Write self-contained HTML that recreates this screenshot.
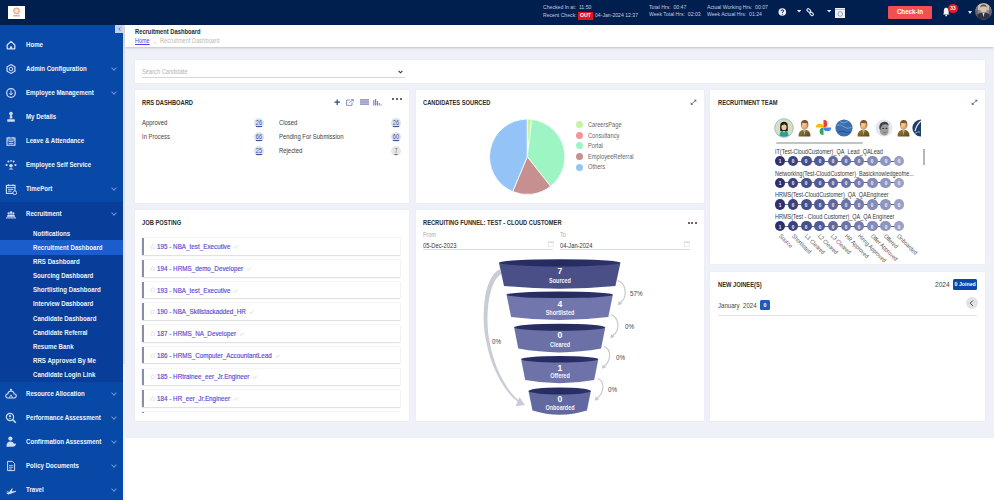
<!DOCTYPE html>
<html><head><meta charset="utf-8">
<style>
*{box-sizing:border-box;margin:0;padding:0}
html,body{width:994px;height:500px;overflow:hidden;background:#fff;font-family:"Liberation Sans",sans-serif;position:relative}
.a{position:absolute}
.t{position:absolute;white-space:nowrap;line-height:1}
.card{position:absolute;background:#fff;border-radius:1px;box-shadow:0 0 1.5px rgba(40,50,90,.07)}
.chev{position:absolute;left:111.5px;width:4px;height:4px;border-right:0.9px solid #6e93d8;border-bottom:0.9px solid #6e93d8;transform:rotate(45deg)}
</style></head><body>
<div class="a" style="left:0px;top:0px;width:994px;height:25px;background:#001f4e;"></div>
<div class="a" style="left:0px;top:25px;width:123px;height:475px;background:#0848a6;"></div>
<div class="a" style="left:123px;top:25px;width:2px;height:475px;background:#f3f4f8;"></div>
<div class="a" style="left:123px;top:25px;width:2px;height:339px;background:#dfe2ea;"></div>
<div class="a" style="left:125px;top:47px;width:869px;height:390.5px;background:#eff1f8;"></div>
<div class="a" style="left:125px;top:25px;width:869px;height:22px;background:#fff;box-shadow:0 1.2px 2.5px rgba(0,0,0,.2)"></div>
<div class="card" style="left:135px;top:60px;width:850px;height:23px"></div>
<div class="card" style="left:135px;top:90px;width:274px;height:113px"></div>
<div class="card" style="left:416px;top:90px;width:288px;height:113px"></div>
<div class="card" style="left:710px;top:90px;width:275px;height:174px"></div>
<div class="card" style="left:135px;top:210px;width:274px;height:211px"></div>
<div class="card" style="left:416px;top:210px;width:288px;height:211px"></div>
<div class="card" style="left:710px;top:272px;width:275px;height:149px"></div>
<div class="a" style="left:8px;top:6px;width:17px;height:13px;background:#fff;"></div>
<svg class="a" style="left:12px;top:7px" width="9" height="11" viewBox="0 0 9 11"><circle cx="4.5" cy="4" r="2.7" fill="#fbe9de" stroke="#eeb090" stroke-width="1.5"/><rect x="1.2" y="8.4" width="6.6" height="0.9" fill="#6b5f5a" opacity=".7"/></svg>
<div class="t" style="left:543.00px;top:5.00px;font-size:5.90px;font-weight:normal;color:#c3cbe0;transform:scaleX(0.87);transform-origin:0 0;">Checked In at:&nbsp;&nbsp;11:50</div>
<div class="t" style="left:543.00px;top:13.00px;font-size:5.90px;font-weight:normal;color:#c3cbe0;transform:scaleX(0.87);transform-origin:0 0;">Recent Check:</div>
<div class="a" style="left:577.5px;top:11.5px;width:15px;height:8px;background:#e4151d;"></div>
<div class="t" style="left:577.50px;top:12.00px;width:15px;text-align:center;font-size:6.10px;font-weight:bold;color:#fff;transform:scaleX(0.87);transform-origin:50% 0;">OUT</div>
<div class="t" style="left:595.00px;top:13.00px;font-size:5.90px;font-weight:normal;color:#c3cbe0;transform:scaleX(0.87);transform-origin:0 0;">04-Jan-2024 12:37</div>
<div class="t" style="left:649.00px;top:5.00px;font-size:5.90px;font-weight:normal;color:#c3cbe0;transform:scaleX(0.87);transform-origin:0 0;">Total Hrs:&nbsp; 00:47</div>
<div class="t" style="left:649.00px;top:12.00px;font-size:5.90px;font-weight:normal;color:#c3cbe0;transform:scaleX(0.87);transform-origin:0 0;">Week Total Hrs:&nbsp; 02:03</div>
<div class="t" style="left:707.00px;top:5.00px;font-size:5.90px;font-weight:normal;color:#c3cbe0;transform:scaleX(0.87);transform-origin:0 0;">Actual Working Hrs:&nbsp; 00:07</div>
<div class="t" style="left:707.00px;top:12.00px;font-size:5.90px;font-weight:normal;color:#c3cbe0;transform:scaleX(0.87);transform-origin:0 0;">Week Actual Hrs:&nbsp; 01:24</div>
<svg class="a" style="left:778px;top:7.5px" width="9" height="9" viewBox="0 0 9 9"><circle cx="4.3" cy="4" r="3.8" fill="#eef0f8"/><path d="M3 3.1 Q3 1.8 4.3 1.8 Q5.6 1.8 5.6 3 Q5.6 3.8 4.4 4.3 L4.4 5" fill="none" stroke="#001f4e" stroke-width="1"/><circle cx="4.4" cy="6.3" r="0.55" fill="#001f4e"/></svg>
<svg class="a" style="left:797.2px;top:10.4px" width="4.2" height="2.6" viewBox="0 0 4.2 2.6"><path d="M0 0 L4.2 0 L2.1 2.6Z" fill="#e5e9f5"/></svg>
<svg class="a" style="left:806px;top:7.5px" width="9" height="9" viewBox="0 0 9 9"><rect x="0.8" y="1.2" width="4" height="2.6" rx="1.3" transform="rotate(40 2.8 2.5)" fill="none" stroke="#e5e9f5" stroke-width="1.1"/><rect x="3.6" y="4.6" width="4" height="2.6" rx="1.3" transform="rotate(40 5.6 5.9)" fill="none" stroke="#e5e9f5" stroke-width="1.1"/></svg>
<svg class="a" style="left:827.2px;top:10.4px" width="4.2" height="2.6" viewBox="0 0 4.2 2.6"><path d="M0 0 L4.2 0 L2.1 2.6Z" fill="#e5e9f5"/></svg>
<svg class="a" style="left:834.8px;top:7.7px" width="10.4" height="10" viewBox="0 0 10.4 10"><rect x="0" y="0" width="10.4" height="10" fill="#eef0f8"/><rect x="0" y="1.4" width="10.4" height="0.6" fill="#9aa0b8"/><circle cx="5.2" cy="6" r="2.3" fill="none" stroke="#8e94ad" stroke-width="0.9"/></svg>
<div class="a" style="left:887.5px;top:5.5px;width:44px;height:13px;background:#f0504f;border-radius:1px"></div>
<div class="t" style="left:887.50px;top:9.00px;width:44px;text-align:center;font-size:7.15px;font-weight:bold;color:#fff;transform:scaleX(0.87);transform-origin:50% 0;">Check-in</div>
<svg class="a" style="left:941px;top:5.5px" width="11" height="11" viewBox="0 0 11 11"><path d="M2 8.5 L2.8 7.3 L2.8 4.6 Q2.8 2 5 1.6 Q7.6 2 7.6 4.6 L7.6 7.3 L8.6 8.5Z" fill="#f4f6fb"/><circle cx="5.2" cy="9.4" r="0.9" fill="#f4f6fb"/></svg>
<div class="a" style="left:948px;top:4px;width:9.5px;height:9px;background:#e31b23;border-radius:50%"></div>
<div class="t" style="left:947.75px;top:6.00px;width:10px;text-align:center;font-size:5.50px;font-weight:bold;color:#fff;transform:scaleX(0.87);transform-origin:50% 0;">33</div>
<svg class="a" style="left:968px;top:10.5px" width="4" height="3" viewBox="0 0 4 3"><path d="M0 0 L4 0 L2 3Z" fill="#e5e9f5"/></svg>
<svg class="a" style="left:974.5px;top:3px" width="17" height="17" viewBox="0 0 17 17"><defs><clipPath id="av"><circle cx="8.5" cy="8.5" r="8.3"/></clipPath></defs><g clip-path="url(#av)"><rect width="17" height="17" fill="#8f8a8c"/><rect x="0" y="0" width="17" height="7" fill="#c9bcb6"/><ellipse cx="8.5" cy="6" rx="3.2" ry="3.8" fill="#d8c0b0"/><path d="M5.2 4.6 Q5.6 1.6 8.5 1.6 Q11.4 1.6 11.8 4.6 Q10 3 8.5 3.2 Q7 3 5.2 4.6Z" fill="#5b4c48"/><path d="M0 17 Q0.5 9.6 8.5 9.6 Q16.5 9.6 17 17Z" fill="#2f3240"/><path d="M7.4 9.8 L8.5 14 L9.6 9.8Z" fill="#d9dce6"/><rect x="0" y="3" width="3" height="14" fill="#4c4d58" opacity=".6"/><rect x="14" y="3" width="3" height="14" fill="#4c4d58" opacity=".6"/></g></svg>
<div class="a" style="left:0px;top:202px;width:123px;height:180px;background:#083d99;"></div>
<div class="a" style="left:0px;top:240px;width:123px;height:14.5px;background:#1b5dcc;"></div>
<div class="a" style="left:115px;top:25px;width:8px;height:8px;background:#c3d0f0;"></div>
<svg class="a" style="left:117.5px;top:27px" width="3" height="4" viewBox="0 0 3 4"><path d="M2.4 0.4 L0.8 2 L2.4 3.6" fill="none" stroke="#56607f" stroke-width="0.8"/></svg>
<div class="t" style="left:25.70px;top:42.00px;font-size:7.10px;font-weight:bold;color:#f2f5fc;transform:scaleX(0.86);transform-origin:0 0;">Home</div>
<div class="t" style="left:25.70px;top:66.00px;font-size:7.10px;font-weight:bold;color:#f2f5fc;transform:scaleX(0.86);transform-origin:0 0;">Admin Configuration</div>
<div class="chev" style="top:65.8px"></div>
<div class="t" style="left:25.70px;top:90.00px;font-size:7.10px;font-weight:bold;color:#f2f5fc;transform:scaleX(0.86);transform-origin:0 0;">Employee Management</div>
<div class="chev" style="top:89.8px"></div>
<div class="t" style="left:25.70px;top:114.00px;font-size:7.10px;font-weight:bold;color:#f2f5fc;transform:scaleX(0.86);transform-origin:0 0;">My Details</div>
<div class="t" style="left:25.70px;top:138.00px;font-size:7.10px;font-weight:bold;color:#f2f5fc;transform:scaleX(0.86);transform-origin:0 0;">Leave &amp; Attendance</div>
<div class="t" style="left:25.70px;top:162.00px;font-size:7.10px;font-weight:bold;color:#f2f5fc;transform:scaleX(0.86);transform-origin:0 0;">Employee Self Service</div>
<div class="t" style="left:25.70px;top:186.00px;font-size:7.10px;font-weight:bold;color:#f2f5fc;transform:scaleX(0.86);transform-origin:0 0;">TimePort</div>
<div class="chev" style="top:185.8px"></div>
<div class="t" style="left:25.70px;top:211.00px;font-size:7.10px;font-weight:bold;color:#f2f5fc;transform:scaleX(0.86);transform-origin:0 0;">Recruitment</div>
<div class="chev" style="top:211.1px"></div>
<div class="t" style="left:25.70px;top:391.00px;font-size:7.10px;font-weight:bold;color:#f2f5fc;transform:scaleX(0.86);transform-origin:0 0;">Resource Allocation</div>
<div class="chev" style="top:391.0px"></div>
<div class="t" style="left:25.70px;top:415.00px;font-size:7.10px;font-weight:bold;color:#f2f5fc;transform:scaleX(0.86);transform-origin:0 0;">Performance Assessment</div>
<div class="chev" style="top:415.0px"></div>
<div class="t" style="left:25.70px;top:439.00px;font-size:7.10px;font-weight:bold;color:#f2f5fc;transform:scaleX(0.86);transform-origin:0 0;">Confirmation Assessment</div>
<div class="chev" style="top:439.0px"></div>
<div class="t" style="left:25.70px;top:463.00px;font-size:7.10px;font-weight:bold;color:#f2f5fc;transform:scaleX(0.86);transform-origin:0 0;">Policy Documents</div>
<div class="chev" style="top:463.0px"></div>
<div class="t" style="left:25.70px;top:487.00px;font-size:7.10px;font-weight:bold;color:#f2f5fc;transform:scaleX(0.86);transform-origin:0 0;">Travel</div>
<div class="chev" style="top:487.0px"></div>
<div class="t" style="left:33.00px;top:230.00px;font-size:7.35px;font-weight:bold;color:#eef2fb;transform:scaleX(0.835);transform-origin:0 0;">Notifications</div>
<div class="t" style="left:33.00px;top:244.00px;font-size:7.35px;font-weight:bold;color:#eef2fb;transform:scaleX(0.835);transform-origin:0 0;">Recruitment Dashboard</div>
<div class="t" style="left:33.00px;top:258.00px;font-size:7.35px;font-weight:bold;color:#eef2fb;transform:scaleX(0.835);transform-origin:0 0;">RRS Dashboard</div>
<div class="t" style="left:33.00px;top:272.00px;font-size:7.35px;font-weight:bold;color:#eef2fb;transform:scaleX(0.835);transform-origin:0 0;">Sourcing Dashboard</div>
<div class="t" style="left:33.00px;top:286.00px;font-size:7.35px;font-weight:bold;color:#eef2fb;transform:scaleX(0.835);transform-origin:0 0;">Shortlisting Dashboard</div>
<div class="t" style="left:33.00px;top:300.00px;font-size:7.35px;font-weight:bold;color:#eef2fb;transform:scaleX(0.835);transform-origin:0 0;">Interview Dashboard</div>
<div class="t" style="left:33.00px;top:315.00px;font-size:7.35px;font-weight:bold;color:#eef2fb;transform:scaleX(0.835);transform-origin:0 0;">Candidate Dashboard</div>
<div class="t" style="left:33.00px;top:329.00px;font-size:7.35px;font-weight:bold;color:#eef2fb;transform:scaleX(0.835);transform-origin:0 0;">Candidate Referral</div>
<div class="t" style="left:33.00px;top:343.00px;font-size:7.35px;font-weight:bold;color:#eef2fb;transform:scaleX(0.835);transform-origin:0 0;">Resume Bank</div>
<div class="t" style="left:33.00px;top:357.00px;font-size:7.35px;font-weight:bold;color:#eef2fb;transform:scaleX(0.835);transform-origin:0 0;">RRS Approved By Me</div>
<div class="t" style="left:33.00px;top:371.00px;font-size:7.35px;font-weight:bold;color:#eef2fb;transform:scaleX(0.835);transform-origin:0 0;">Candidate Login Link</div>
<svg class="a" style="left:5px;top:38.5px" width="12" height="12" viewBox="0 0 12 12"><path d="M2.2 6 L6 2.4 L9.8 6 L9.8 9.8 L2.2 9.8Z" fill="none" stroke="#d2ddf5" stroke-width="1.3" stroke-linejoin="round"/><path d="M4.8 9.8 L4.8 7.4 L7.2 7.4 L7.2 9.8" fill="#d2ddf5"/></svg>
<svg class="a" style="left:5px;top:62.5px" width="12" height="12" viewBox="0 0 12 12"><path d="M6 1.6 L9.9 3.8 L9.9 8.2 L6 10.4 L2.1 8.2 L2.1 3.8Z" fill="none" stroke="#d2ddf5" stroke-width="1.2"/><circle cx="6" cy="6" r="1.8" fill="none" stroke="#d2ddf5" stroke-width="1"/></svg>
<svg class="a" style="left:5px;top:86.5px" width="12" height="12" viewBox="0 0 12 12"><circle cx="6" cy="6" r="4.3" fill="none" stroke="#d2ddf5" stroke-width="1.2"/><path d="M6 3.4 L6 7.8 M4.3 6.2 L6 8 L7.7 6.2" fill="none" stroke="#d2ddf5" stroke-width="1"/></svg>
<svg class="a" style="left:5px;top:110.5px" width="12" height="12" viewBox="0 0 12 12"><circle cx="6" cy="2.6" r="1.8" fill="#d2ddf5"/><path d="M4.9 4.2 L7.1 4.2 L7.4 7.6 L4.6 7.6Z" fill="#d2ddf5"/><rect x="2.2" y="8.2" width="7.6" height="2.6" rx="0.6" fill="#d2ddf5"/></svg>
<svg class="a" style="left:5px;top:134.5px" width="12" height="12" viewBox="0 0 12 12"><rect x="2" y="3" width="8" height="7.2" fill="none" stroke="#d2ddf5" stroke-width="1.1"/><path d="M2 5 H10 M4 1.8 V3.6 M8 1.8 V3.6 M3.6 6.6 H8.4 M3.6 8.4 H8.4" stroke="#d2ddf5" stroke-width="0.9"/></svg>
<svg class="a" style="left:5px;top:158.5px" width="12" height="12" viewBox="0 0 12 12"><circle cx="6" cy="6.8" r="1.8" fill="#d2ddf5"/><circle cx="1.6" cy="6" r="1.1" fill="#d2ddf5"/><circle cx="10.4" cy="6" r="1.1" fill="#d2ddf5"/><circle cx="3.4" cy="2.6" r="1" fill="#d2ddf5"/><circle cx="8.6" cy="2.6" r="1" fill="#d2ddf5"/><circle cx="6" cy="1.8" r="0.9" fill="#d2ddf5"/><path d="M3.6 10.6 Q6 8 8.4 10.6Z" fill="#d2ddf5"/></svg>
<svg class="a" style="left:5px;top:182.5px" width="12" height="12" viewBox="0 0 12 12"><rect x="1.4" y="2.4" width="8.6" height="8" fill="none" stroke="#d2ddf5" stroke-width="1.1"/><path d="M1.4 4.6 H10 M3.5 1.2 V3.2 M8 1.2 V3.2 M3 6.4 H8.4 M3 8.2 H6.6" stroke="#d2ddf5" stroke-width="0.9"/><circle cx="9.8" cy="9.8" r="1.9" fill="#0848a6" stroke="#d2ddf5" stroke-width="0.9"/></svg>
<svg class="a" style="left:5px;top:208px" width="12" height="12" viewBox="0 0 12 12"><circle cx="3.6" cy="5.4" r="1.1" fill="#d2ddf5"/><circle cx="6" cy="4.6" r="1.3" fill="#d2ddf5"/><circle cx="8.4" cy="5.4" r="1.1" fill="#d2ddf5"/><path d="M1.8 8.8 Q2 6.8 3.6 6.8 Q4.8 6.8 6 6.2 Q7.2 6.8 8.4 6.8 Q10 6.8 10.2 8.8Z" fill="#d2ddf5"/><rect x="1" y="9.4" width="10" height="1" fill="#d2ddf5"/></svg>
<svg class="a" style="left:5px;top:387.7px" width="12" height="12" viewBox="0 0 12 12"><path d="M3 10 Q0.6 10 0.8 7.6 Q1 5.8 2.8 6 Q3 3.2 6 3 Q9 3.2 9.2 6 Q11.2 5.8 11.2 7.8 Q11.2 10 9 10Z" fill="none" stroke="#d2ddf5" stroke-width="1.1"/><circle cx="6" cy="1.8" r="1.1" fill="#d2ddf5"/><path d="M4.2 10 L6 6.8 L7.8 10" fill="none" stroke="#d2ddf5" stroke-width="0.9"/></svg>
<svg class="a" style="left:5px;top:411.7px" width="12" height="12" viewBox="0 0 12 12"><circle cx="5" cy="5" r="3.6" fill="none" stroke="#d2ddf5" stroke-width="1.2"/><path d="M7.6 7.6 L10.8 10.8" stroke="#d2ddf5" stroke-width="1.5"/><circle cx="5" cy="4.2" r="1.1" fill="#d2ddf5"/><path d="M3.2 6.8 Q5 5.2 6.8 6.8" fill="#d2ddf5"/></svg>
<svg class="a" style="left:5px;top:435.7px" width="12" height="12" viewBox="0 0 12 12"><circle cx="5.4" cy="2.6" r="2.1" fill="#d2ddf5"/><path d="M1.4 10.8 Q1.4 5.4 5.4 5.4 Q8.4 5.4 9 7.8 L11 7.6 Q10.8 10.8 7.4 10.8Z" fill="#d2ddf5"/></svg>
<svg class="a" style="left:5px;top:459.7px" width="12" height="12" viewBox="0 0 12 12"><path d="M2.6 1.4 L7.4 1.4 L9.6 3.6 L9.6 10.6 L2.6 10.6Z" fill="none" stroke="#d2ddf5" stroke-width="1"/><path d="M4 5.6 H8.2 M4 7.3 H8.2 M4 9 H6.8" stroke="#d2ddf5" stroke-width="0.8"/></svg>
<svg class="a" style="left:5px;top:483.7px" width="12" height="12" viewBox="0 0 12 12"><path d="M1 8.8 L4 8.2 L6.8 4.4 L7.8 4.6 L6.8 7.6 L11 6.8 L11 7.8 L6.6 9.4 L3.2 10.4 Z" fill="#d2ddf5"/><path d="M1.6 7.2 L3 6.8 L4 8" fill="#d2ddf5"/></svg>
<div class="t" style="left:135.00px;top:29.00px;font-size:6.65px;font-weight:bold;color:#2a2a2a;transform:scaleX(0.87);transform-origin:0 0;">Recruitment Dashboard</div>
<div class="t" style="left:135.00px;top:38.00px;font-size:6.30px;font-weight:normal;color:#5a3fd6;transform:scaleX(0.87);transform-origin:0 0;text-decoration:underline">Home</div>
<div class="t" style="left:153.50px;top:40.00px;font-size:5.75px;font-weight:normal;color:#aaa;transform:scaleX(0.87);transform-origin:0 0;">&#8250;</div>
<div class="t" style="left:159.70px;top:38.00px;font-size:6.50px;font-weight:normal;color:#b9b9b9;transform:scaleX(0.87);transform-origin:0 0;">Recruitment Dashboard</div>
<div class="t" style="left:142.00px;top:69.00px;font-size:6.55px;font-weight:normal;color:#b3b3b3;transform:scaleX(0.87);transform-origin:0 0;">Search Candidate</div>
<div class="a" style="left:142px;top:77px;width:263px;height:1px;background:#d6d6d6;"></div>
<svg class="a" style="left:398px;top:69.5px" width="5" height="4" viewBox="0 0 5 4"><path d="M0.6 0.8 L2.5 2.8 L4.4 0.8" fill="none" stroke="#333" stroke-width="1.1"/></svg>
<div class="t" style="left:142.00px;top:100.00px;font-size:6.60px;font-weight:bold;color:#2b2b2b;transform:scaleX(0.87);transform-origin:0 0;">RRS DASHBOARD</div>
<svg class="a" style="left:333.6px;top:98.6px" width="6.4" height="6.4" viewBox="0 0 6.4 6.4"><path d="M3.2 0.4 V6 M0.4 3.2 H6" stroke="#1f4d98" stroke-width="1.2"/></svg>
<svg class="a" style="left:346px;top:98.8px" width="8" height="7" viewBox="0 0 8 7"><path d="M4 1 H0.6 V6.4 H6 V3.4" fill="none" stroke="#6f7aa6" stroke-width="0.8"/><path d="M3.2 3.8 L7.2 0.6 M5 0.6 H7.3 V2.6" fill="none" stroke="#6f7aa6" stroke-width="0.8"/></svg>
<svg class="a" style="left:359.5px;top:99.2px" width="9.5" height="6" viewBox="0 0 9.5 6"><rect x="0" y="0" width="9.5" height="6" fill="#9a9cc9"/><path d="M0 1.5 H9.5 M0 3 H9.5 M0 4.5 H9.5" stroke="#c9cae6" stroke-width="0.5"/></svg>
<svg class="a" style="left:373.3px;top:98.8px" width="10" height="7" viewBox="0 0 10 7"><path d="M0.8 1 V6.5 M2.6 0 V6.5 M4.4 2 V6.5 M6.2 4 V6.5 M8.2 5.6 V6.5" stroke="#7f86b5" stroke-width="1.2"/></svg>
<div class="a" style="left:392.3px;top:98.3px;width:2.2px;height:2.2px;background:#333;border-radius:50%"></div>
<div class="a" style="left:395.90000000000003px;top:98.3px;width:2.2px;height:2.2px;background:#333;border-radius:50%"></div>
<div class="a" style="left:399.5px;top:98.3px;width:2.2px;height:2.2px;background:#333;border-radius:50%"></div>
<div class="t" style="left:142.00px;top:120.00px;font-size:6.80px;font-weight:normal;color:#3c3c3c;transform:scaleX(0.87);transform-origin:0 0;">Approved</div>
<div class="a" style="left:254.3px;top:118.0px;width:10px;height:10px;background:#dbe3f3;border-radius:50%"></div>
<div class="t" style="left:254.30px;top:120.00px;width:10px;text-align:center;font-size:6.45px;font-weight:normal;color:#3b5694;transform:scaleX(0.87);transform-origin:50% 0;text-decoration:underline;text-decoration-thickness:0.5px;text-underline-offset:0.6px">26</div>
<div class="t" style="left:142.00px;top:134.00px;font-size:6.80px;font-weight:normal;color:#54434a;transform:scaleX(0.87);transform-origin:0 0;">In Process</div>
<div class="a" style="left:254.3px;top:132.1px;width:10px;height:10px;background:#dbe3f3;border-radius:50%"></div>
<div class="t" style="left:254.30px;top:134.00px;width:10px;text-align:center;font-size:6.45px;font-weight:normal;color:#3b5694;transform:scaleX(0.87);transform-origin:50% 0;text-decoration:underline;text-decoration-thickness:0.5px;text-underline-offset:0.6px">66</div>
<div class="a" style="left:254.3px;top:145.8px;width:10px;height:10px;background:#dbe3f3;border-radius:50%"></div>
<div class="t" style="left:254.30px;top:148.00px;width:10px;text-align:center;font-size:6.45px;font-weight:normal;color:#3b5694;transform:scaleX(0.87);transform-origin:50% 0;text-decoration:underline;text-decoration-thickness:0.5px;text-underline-offset:0.6px">25</div>
<div class="t" style="left:279.20px;top:120.00px;font-size:6.80px;font-weight:normal;color:#3c3c3c;transform:scaleX(0.87);transform-origin:0 0;">Closed</div>
<div class="a" style="left:391px;top:118.0px;width:10px;height:10px;background:#dbe3f3;border-radius:50%"></div>
<div class="t" style="left:391.00px;top:120.00px;width:10px;text-align:center;font-size:6.45px;font-weight:normal;color:#3b5694;transform:scaleX(0.87);transform-origin:50% 0;text-decoration:underline;text-decoration-thickness:0.5px;text-underline-offset:0.6px">26</div>
<div class="t" style="left:279.20px;top:134.00px;font-size:6.80px;font-weight:normal;color:#3c3c3c;transform:scaleX(0.87);transform-origin:0 0;">Pending For Submission</div>
<div class="a" style="left:391px;top:132.1px;width:10px;height:10px;background:#dbe3f3;border-radius:50%"></div>
<div class="t" style="left:391.00px;top:134.00px;width:10px;text-align:center;font-size:6.45px;font-weight:normal;color:#3b5694;transform:scaleX(0.87);transform-origin:50% 0;text-decoration:underline;text-decoration-thickness:0.5px;text-underline-offset:0.6px">60</div>
<div class="t" style="left:279.20px;top:148.00px;font-size:6.80px;font-weight:normal;color:#3c3c3c;transform:scaleX(0.87);transform-origin:0 0;">Rejected</div>
<div class="a" style="left:391px;top:145.8px;width:10px;height:10px;background:#e6e6e8;border-radius:50%"></div>
<div class="t" style="left:391.00px;top:148.00px;width:10px;text-align:center;font-size:6.45px;font-weight:normal;color:#6b6b6b;transform:scaleX(0.87);transform-origin:50% 0;text-decoration:underline;text-decoration-thickness:0.5px;text-underline-offset:0.6px">7</div>
<div class="t" style="left:423.00px;top:100.00px;font-size:6.60px;font-weight:bold;color:#2b2b2b;transform:scaleX(0.87);transform-origin:0 0;">CANDIDATES SOURCED</div>
<svg class="a" style="left:690px;top:98.5px" width="7" height="6.5" viewBox="0 0 7 6.5"><path d="M1 5.5 L6 1" stroke="#4b5b86" stroke-width="0.8"/><path d="M3.8 0.8 L6.3 0.7 L6.2 3Z M0.7 3.5 L0.8 5.8 L3.2 5.7Z" fill="#4b5b86"/></svg>
<svg class="a" style="left:480px;top:110px" width="95" height="95" viewBox="0 0 95 95"><path d="M47.20 46.80 L47.20 9.10 A37.7 37.7 0 0 1 51.79 9.38Z" fill="#c6f5a1" stroke="#fff" stroke-width="0.8" stroke-linejoin="round"/><path d="M47.20 46.80 L51.79 9.38 A37.7 37.7 0 0 1 70.62 76.35Z" fill="#9df5c4" stroke="#fff" stroke-width="0.8" stroke-linejoin="round"/><path d="M47.20 46.80 L70.62 76.35 A37.7 37.7 0 0 1 32.65 81.58Z" fill="#c5908f" stroke="#fff" stroke-width="0.8" stroke-linejoin="round"/><path d="M47.20 46.80 L32.65 81.58 A37.7 37.7 0 0 1 47.20 9.10Z" fill="#94c4f7" stroke="#fff" stroke-width="0.8" stroke-linejoin="round"/></svg>
<div class="a" style="left:576.3px;top:121.3px;width:7px;height:7px;background:#c6f5a1;border-radius:50%"></div>
<div class="t" style="left:588.20px;top:122.00px;font-size:6.55px;font-weight:normal;color:#666;transform:scaleX(0.87);transform-origin:0 0;">CareersPage</div>
<div class="a" style="left:576.3px;top:131.85px;width:7px;height:7px;background:#f4959c;border-radius:50%"></div>
<div class="t" style="left:588.20px;top:133.00px;font-size:6.55px;font-weight:normal;color:#666;transform:scaleX(0.87);transform-origin:0 0;">Consultancy</div>
<div class="a" style="left:576.3px;top:142.4px;width:7px;height:7px;background:#9df5c4;border-radius:50%"></div>
<div class="t" style="left:588.20px;top:143.00px;font-size:6.55px;font-weight:normal;color:#666;transform:scaleX(0.87);transform-origin:0 0;">Portal</div>
<div class="a" style="left:576.3px;top:152.95px;width:7px;height:7px;background:#c5908f;border-radius:50%"></div>
<div class="t" style="left:588.20px;top:154.00px;font-size:6.55px;font-weight:normal;color:#666;transform:scaleX(0.87);transform-origin:0 0;">EmployeeReferral</div>
<div class="a" style="left:576.3px;top:163.5px;width:7px;height:7px;background:#94c4f7;border-radius:50%"></div>
<div class="t" style="left:588.20px;top:164.00px;font-size:6.55px;font-weight:normal;color:#666;transform:scaleX(0.87);transform-origin:0 0;">Others</div>
<div class="t" style="left:718.00px;top:100.00px;font-size:6.60px;font-weight:bold;color:#2b2b2b;transform:scaleX(0.87);transform-origin:0 0;">RECRUITMENT TEAM</div>
<svg class="a" style="left:971px;top:98.5px" width="7" height="6.5" viewBox="0 0 7 6.5"><path d="M1 5.5 L6 1" stroke="#4b5b86" stroke-width="0.8"/><path d="M3.8 0.8 L6.3 0.7 L6.2 3Z M0.7 3.5 L0.8 5.8 L3.2 5.7Z" fill="#4b5b86"/></svg>
<div class="a" style="left:770px;top:115px;width:151px;height:25px;overflow:hidden">
<svg class="a" style="left:4.2px;top:2.5px" width="20" height="20" viewBox="0 0 20 20"><circle cx="10" cy="10" r="9.3" fill="#d3e2bb" stroke="#a7b3e4" stroke-width="1"/><path d="M5.5 17.8 Q5.5 12.5 10 12.5 Q14.5 12.5 14.5 17.8 Q10 19.6 5.5 17.8Z" fill="#2aa38b"/><path d="M9.1 12.6 L10 15 L10.9 12.6Z" fill="#e9f4f0"/><path d="M6.3 13 Q5.8 6.5 7 5 Q10 2.6 13 5 Q14.2 6.5 13.7 13Z" fill="#1f1b1f"/><ellipse cx="10" cy="9" rx="2.6" ry="3.2" fill="#f0c5a2"/><path d="M7.3 8 Q8 4.6 10 4.8 Q12.4 4.6 12.7 8 Q11 6 10 6.4 Q8.6 6.4 7.3 8Z" fill="#1f1b1f"/></svg>
<svg class="a" style="left:27.5px;top:3.5px" width="13" height="18" viewBox="0 0 13 18"><defs><linearGradient id="suit" x1="0" y1="0" x2="1" y2="1"><stop offset="0" stop-color="#9a7f3a"/><stop offset="1" stop-color="#5e4612"/></linearGradient><radialGradient id="face" cx="0.4" cy="0.45" r="0.6"><stop offset="0" stop-color="#f6cfa0"/><stop offset="1" stop-color="#d39556"/></radialGradient></defs><path d="M0.6 17.6 Q0.2 11.2 6.5 10.6 Q12.8 11.2 12.4 17.6Z" fill="url(#suit)"/><path d="M5.4 10.8 L6.5 16.2 L7.6 10.8Z" fill="#c9c6d8"/><path d="M6.1 11.6 L6.5 15.2 L6.9 11.6Z" fill="#7c86b8"/><ellipse cx="6.6" cy="6.3" rx="3.5" ry="4.3" fill="url(#face)"/><path d="M3 6.4 Q2.6 1 6.8 1 Q10.6 1.1 10.3 5.4 Q10.4 7.4 9.8 8.4 Q9.9 5 9 3.8 Q7 4.4 4.2 3.8 Q3.6 5 3.6 7.4Z" fill="#7e5228"/></svg>
<svg class="a" style="left:45.4px;top:4.3px" width="17" height="17" viewBox="0 0 17 17"><path d="M8.5 8.5 L8.5 0.8 A3.85 3.85 0 0 1 8.5 8.5Z" fill="#ea4335"/><path d="M8.5 8.5 L16.2 8.5 A3.85 3.85 0 0 1 8.5 8.5Z" fill="#4285f4"/><path d="M8.5 8.5 L8.5 16.2 A3.85 3.85 0 0 1 8.5 8.5Z" fill="#34a853"/><path d="M8.5 8.5 L0.8 8.5 A3.85 3.85 0 0 1 8.5 8.5Z" fill="#fbbc04"/></svg>
<svg class="a" style="left:64.5px;top:3.5px" width="18" height="18" viewBox="0 0 18 18"><circle cx="9" cy="9" r="8.6" fill="#3b6fae"/><path d="M1.5 6.5 Q5.5 4.5 8.5 7.5 Q11.5 10.5 16.5 8.5" fill="none" stroke="#7aa6d8" stroke-width="0.9"/><path d="M3 13 Q7 11 10.5 13 Q13.5 15 15.5 12.5" fill="none" stroke="#23508a" stroke-width="1"/><path d="M5 2.5 Q8.5 5.5 12.5 2.5" fill="none" stroke="#95bbe4" stroke-width="0.7"/></svg>
<svg class="a" style="left:87.3px;top:3.5px" width="13" height="18" viewBox="0 0 13 18"><defs><linearGradient id="suit" x1="0" y1="0" x2="1" y2="1"><stop offset="0" stop-color="#9a7f3a"/><stop offset="1" stop-color="#5e4612"/></linearGradient><radialGradient id="face" cx="0.4" cy="0.45" r="0.6"><stop offset="0" stop-color="#f6cfa0"/><stop offset="1" stop-color="#d39556"/></radialGradient></defs><path d="M0.6 17.6 Q0.2 11.2 6.5 10.6 Q12.8 11.2 12.4 17.6Z" fill="url(#suit)"/><path d="M5.4 10.8 L6.5 16.2 L7.6 10.8Z" fill="#c9c6d8"/><path d="M6.1 11.6 L6.5 15.2 L6.9 11.6Z" fill="#7c86b8"/><ellipse cx="6.6" cy="6.3" rx="3.5" ry="4.3" fill="url(#face)"/><path d="M3 6.4 Q2.6 1 6.8 1 Q10.6 1.1 10.3 5.4 Q10.4 7.4 9.8 8.4 Q9.9 5 9 3.8 Q7 4.4 4.2 3.8 Q3.6 5 3.6 7.4Z" fill="#7e5228"/></svg>
<svg class="a" style="left:105px;top:3.5px" width="18" height="18" viewBox="0 0 18 18"><circle cx="9" cy="9" r="8.6" fill="#dfe7f1"/><path d="M4.6 9 Q4.4 3.4 9.4 3.2 Q13.6 3.4 13.6 8.6 L13.4 13.4 Q12.4 16.4 9.6 16.6 Q6 16.4 5 13Z" fill="#9d9a98"/><path d="M4.4 9.6 Q4 3 9.6 2.8 Q13.2 3 13.8 6.4 Q11 4.6 8 5.6 Q6 7 5.4 11Z" fill="#3e3d40"/><ellipse cx="8.2" cy="9.4" rx="0.9" ry="0.6" fill="#2a2a2a"/><ellipse cx="11.4" cy="9.4" rx="0.9" ry="0.6" fill="#2a2a2a"/><path d="M8.6 13.4 Q10 14 11.2 13.4" fill="none" stroke="#6a5f5c" stroke-width="0.6"/></svg>
<svg class="a" style="left:126.8px;top:3.5px" width="13" height="18" viewBox="0 0 13 18"><defs><linearGradient id="suit" x1="0" y1="0" x2="1" y2="1"><stop offset="0" stop-color="#9a7f3a"/><stop offset="1" stop-color="#5e4612"/></linearGradient><radialGradient id="face" cx="0.4" cy="0.45" r="0.6"><stop offset="0" stop-color="#f6cfa0"/><stop offset="1" stop-color="#d39556"/></radialGradient></defs><path d="M0.6 17.6 Q0.2 11.2 6.5 10.6 Q12.8 11.2 12.4 17.6Z" fill="url(#suit)"/><path d="M5.4 10.8 L6.5 16.2 L7.6 10.8Z" fill="#c9c6d8"/><path d="M6.1 11.6 L6.5 15.2 L6.9 11.6Z" fill="#7c86b8"/><ellipse cx="6.6" cy="6.3" rx="3.5" ry="4.3" fill="url(#face)"/><path d="M3 6.4 Q2.6 1 6.8 1 Q10.6 1.1 10.3 5.4 Q10.4 7.4 9.8 8.4 Q9.9 5 9 3.8 Q7 4.4 4.2 3.8 Q3.6 5 3.6 7.4Z" fill="#7e5228"/></svg>
<svg class="a" style="left:142px;top:3.5px" width="18" height="18" viewBox="0 0 18 18"><circle cx="9" cy="9" r="8.6" fill="#1f3d6b"/><path d="M3 12 Q5 5 9 2" fill="none" stroke="#e8eef6" stroke-width="1.2"/><path d="M2 15 Q6 12 8 13" fill="none" stroke="#b9c9de" stroke-width="0.8"/></svg>
</div>
<div class="a" style="left:776px;top:141.6px;width:87px;height:2px;background:#c3c3c3;border-radius:1px"></div>
<div class="a" style="left:923px;top:149px;width:1.6px;height:15.5px;background:#b5b5b5;"></div>
<div class="a" style="left:770px;top:144.5px;width:155px;height:88px;overflow:hidden">
<div class="t" style="left:5.00px;top:4.00px;font-size:6.30px;font-weight:normal;color:#383838;transform:scaleX(0.87);transform-origin:0 0;">IT(Test-CloudCustomer)_QA_Lead_QALead</div>
<div class="a" style="left:10px;top:16.1px;width:118.8px;height:1px;background:#5a6296;"></div>
<div class="a" style="left:4.75px;top:11.35px;width:10.5px;height:10.5px;background:#2b316f;border-radius:50%"></div>
<div class="t" style="left:5.00px;top:14.00px;width:10px;text-align:center;font-size:5.30px;font-weight:bold;color:#f4f5fb;transform:scaleX(0.87);transform-origin:50% 0;">1</div>
<div class="a" style="left:17.95px;top:11.35px;width:10.5px;height:10.5px;background:#394180;border-radius:50%"></div>
<div class="t" style="left:18.20px;top:14.00px;width:10px;text-align:center;font-size:5.30px;font-weight:bold;color:#f4f5fb;transform:scaleX(0.87);transform-origin:50% 0;">0</div>
<div class="a" style="left:31.15px;top:11.35px;width:10.5px;height:10.5px;background:#474f8b;border-radius:50%"></div>
<div class="t" style="left:31.40px;top:14.00px;width:10px;text-align:center;font-size:5.30px;font-weight:bold;color:#f4f5fb;transform:scaleX(0.87);transform-origin:50% 0;">0</div>
<div class="a" style="left:44.35px;top:11.35px;width:10.5px;height:10.5px;background:#535b94;border-radius:50%"></div>
<div class="t" style="left:44.60px;top:14.00px;width:10px;text-align:center;font-size:5.30px;font-weight:bold;color:#f4f5fb;transform:scaleX(0.87);transform-origin:50% 0;">0</div>
<div class="a" style="left:57.55px;top:11.35px;width:10.5px;height:10.5px;background:#5f679d;border-radius:50%"></div>
<div class="t" style="left:57.80px;top:14.00px;width:10px;text-align:center;font-size:5.30px;font-weight:bold;color:#f4f5fb;transform:scaleX(0.87);transform-origin:50% 0;">0</div>
<div class="a" style="left:70.75px;top:11.35px;width:10.5px;height:10.5px;background:#6a72a6;border-radius:50%"></div>
<div class="t" style="left:71.00px;top:14.00px;width:10px;text-align:center;font-size:5.30px;font-weight:bold;color:#f4f5fb;transform:scaleX(0.87);transform-origin:50% 0;">0</div>
<div class="a" style="left:83.95px;top:11.35px;width:10.5px;height:10.5px;background:#777eaf;border-radius:50%"></div>
<div class="t" style="left:84.20px;top:14.00px;width:10px;text-align:center;font-size:5.30px;font-weight:bold;color:#f4f5fb;transform:scaleX(0.87);transform-origin:50% 0;">0</div>
<div class="a" style="left:97.15px;top:11.35px;width:10.5px;height:10.5px;background:#858bb7;border-radius:50%"></div>
<div class="t" style="left:97.40px;top:14.00px;width:10px;text-align:center;font-size:5.30px;font-weight:bold;color:#f4f5fb;transform:scaleX(0.87);transform-origin:50% 0;">0</div>
<div class="a" style="left:110.35px;top:11.35px;width:10.5px;height:10.5px;background:#9095be;border-radius:50%"></div>
<div class="t" style="left:110.60px;top:14.00px;width:10px;text-align:center;font-size:5.30px;font-weight:bold;color:#f4f5fb;transform:scaleX(0.87);transform-origin:50% 0;">0</div>
<div class="a" style="left:123.55px;top:11.35px;width:10.5px;height:10.5px;background:#9ca0c6;border-radius:50%"></div>
<div class="t" style="left:123.80px;top:14.00px;width:10px;text-align:center;font-size:5.30px;font-weight:bold;color:#f4f5fb;transform:scaleX(0.87);transform-origin:50% 0;">0</div>
<div class="t" style="left:5.00px;top:26.00px;font-size:6.30px;font-weight:normal;color:#383838;transform:scaleX(0.87);transform-origin:0 0;">Networking(Test-CloudCustomer)_Basicknowledgeofne...</div>
<div class="a" style="left:10px;top:37.8px;width:118.8px;height:1px;background:#5a6296;"></div>
<div class="a" style="left:4.75px;top:33.05px;width:10.5px;height:10.5px;background:#2b316f;border-radius:50%"></div>
<div class="t" style="left:5.00px;top:36.00px;width:10px;text-align:center;font-size:5.30px;font-weight:bold;color:#f4f5fb;transform:scaleX(0.87);transform-origin:50% 0;">1</div>
<div class="a" style="left:17.95px;top:33.05px;width:10.5px;height:10.5px;background:#394180;border-radius:50%"></div>
<div class="t" style="left:18.20px;top:36.00px;width:10px;text-align:center;font-size:5.30px;font-weight:bold;color:#f4f5fb;transform:scaleX(0.87);transform-origin:50% 0;">0</div>
<div class="a" style="left:31.15px;top:33.05px;width:10.5px;height:10.5px;background:#474f8b;border-radius:50%"></div>
<div class="t" style="left:31.40px;top:36.00px;width:10px;text-align:center;font-size:5.30px;font-weight:bold;color:#f4f5fb;transform:scaleX(0.87);transform-origin:50% 0;">0</div>
<div class="a" style="left:44.35px;top:33.05px;width:10.5px;height:10.5px;background:#535b94;border-radius:50%"></div>
<div class="t" style="left:44.60px;top:36.00px;width:10px;text-align:center;font-size:5.30px;font-weight:bold;color:#f4f5fb;transform:scaleX(0.87);transform-origin:50% 0;">0</div>
<div class="a" style="left:57.55px;top:33.05px;width:10.5px;height:10.5px;background:#5f679d;border-radius:50%"></div>
<div class="t" style="left:57.80px;top:36.00px;width:10px;text-align:center;font-size:5.30px;font-weight:bold;color:#f4f5fb;transform:scaleX(0.87);transform-origin:50% 0;">0</div>
<div class="a" style="left:70.75px;top:33.05px;width:10.5px;height:10.5px;background:#6a72a6;border-radius:50%"></div>
<div class="t" style="left:71.00px;top:36.00px;width:10px;text-align:center;font-size:5.30px;font-weight:bold;color:#f4f5fb;transform:scaleX(0.87);transform-origin:50% 0;">0</div>
<div class="a" style="left:83.95px;top:33.05px;width:10.5px;height:10.5px;background:#777eaf;border-radius:50%"></div>
<div class="t" style="left:84.20px;top:36.00px;width:10px;text-align:center;font-size:5.30px;font-weight:bold;color:#f4f5fb;transform:scaleX(0.87);transform-origin:50% 0;">0</div>
<div class="a" style="left:97.15px;top:33.05px;width:10.5px;height:10.5px;background:#858bb7;border-radius:50%"></div>
<div class="t" style="left:97.40px;top:36.00px;width:10px;text-align:center;font-size:5.30px;font-weight:bold;color:#f4f5fb;transform:scaleX(0.87);transform-origin:50% 0;">0</div>
<div class="a" style="left:110.35px;top:33.05px;width:10.5px;height:10.5px;background:#9095be;border-radius:50%"></div>
<div class="t" style="left:110.60px;top:36.00px;width:10px;text-align:center;font-size:5.30px;font-weight:bold;color:#f4f5fb;transform:scaleX(0.87);transform-origin:50% 0;">0</div>
<div class="a" style="left:123.55px;top:33.05px;width:10.5px;height:10.5px;background:#9ca0c6;border-radius:50%"></div>
<div class="t" style="left:123.80px;top:36.00px;width:10px;text-align:center;font-size:5.30px;font-weight:bold;color:#f4f5fb;transform:scaleX(0.87);transform-origin:50% 0;">0</div>
<div class="t" style="left:5.00px;top:47.00px;font-size:6.30px;font-weight:normal;color:#383838;transform:scaleX(0.87);transform-origin:0 0;">HRMS(Test-CloudCustomer)_QA_QAEngineer</div>
<div class="a" style="left:10px;top:59.5px;width:118.8px;height:1px;background:#5a6296;"></div>
<div class="a" style="left:4.75px;top:54.75px;width:10.5px;height:10.5px;background:#2b316f;border-radius:50%"></div>
<div class="t" style="left:5.00px;top:58.00px;width:10px;text-align:center;font-size:5.30px;font-weight:bold;color:#f4f5fb;transform:scaleX(0.87);transform-origin:50% 0;">1</div>
<div class="a" style="left:17.95px;top:54.75px;width:10.5px;height:10.5px;background:#394180;border-radius:50%"></div>
<div class="t" style="left:18.20px;top:58.00px;width:10px;text-align:center;font-size:5.30px;font-weight:bold;color:#f4f5fb;transform:scaleX(0.87);transform-origin:50% 0;">0</div>
<div class="a" style="left:31.15px;top:54.75px;width:10.5px;height:10.5px;background:#474f8b;border-radius:50%"></div>
<div class="t" style="left:31.40px;top:58.00px;width:10px;text-align:center;font-size:5.30px;font-weight:bold;color:#f4f5fb;transform:scaleX(0.87);transform-origin:50% 0;">0</div>
<div class="a" style="left:44.35px;top:54.75px;width:10.5px;height:10.5px;background:#535b94;border-radius:50%"></div>
<div class="t" style="left:44.60px;top:58.00px;width:10px;text-align:center;font-size:5.30px;font-weight:bold;color:#f4f5fb;transform:scaleX(0.87);transform-origin:50% 0;">0</div>
<div class="a" style="left:57.55px;top:54.75px;width:10.5px;height:10.5px;background:#5f679d;border-radius:50%"></div>
<div class="t" style="left:57.80px;top:58.00px;width:10px;text-align:center;font-size:5.30px;font-weight:bold;color:#f4f5fb;transform:scaleX(0.87);transform-origin:50% 0;">0</div>
<div class="a" style="left:70.75px;top:54.75px;width:10.5px;height:10.5px;background:#6a72a6;border-radius:50%"></div>
<div class="t" style="left:71.00px;top:58.00px;width:10px;text-align:center;font-size:5.30px;font-weight:bold;color:#f4f5fb;transform:scaleX(0.87);transform-origin:50% 0;">0</div>
<div class="a" style="left:83.95px;top:54.75px;width:10.5px;height:10.5px;background:#777eaf;border-radius:50%"></div>
<div class="t" style="left:84.20px;top:58.00px;width:10px;text-align:center;font-size:5.30px;font-weight:bold;color:#f4f5fb;transform:scaleX(0.87);transform-origin:50% 0;">0</div>
<div class="a" style="left:97.15px;top:54.75px;width:10.5px;height:10.5px;background:#858bb7;border-radius:50%"></div>
<div class="t" style="left:97.40px;top:58.00px;width:10px;text-align:center;font-size:5.30px;font-weight:bold;color:#f4f5fb;transform:scaleX(0.87);transform-origin:50% 0;">0</div>
<div class="a" style="left:110.35px;top:54.75px;width:10.5px;height:10.5px;background:#9095be;border-radius:50%"></div>
<div class="t" style="left:110.60px;top:58.00px;width:10px;text-align:center;font-size:5.30px;font-weight:bold;color:#f4f5fb;transform:scaleX(0.87);transform-origin:50% 0;">0</div>
<div class="a" style="left:123.55px;top:54.75px;width:10.5px;height:10.5px;background:#9ca0c6;border-radius:50%"></div>
<div class="t" style="left:123.80px;top:58.00px;width:10px;text-align:center;font-size:5.30px;font-weight:bold;color:#f4f5fb;transform:scaleX(0.87);transform-origin:50% 0;">0</div>
<div class="t" style="left:5.00px;top:69.00px;font-size:6.30px;font-weight:normal;color:#383838;transform:scaleX(0.87);transform-origin:0 0;">HRMS(Test - Cloud Customer)_QA_QA Engineer</div>
<div class="a" style="left:10px;top:81.2px;width:118.8px;height:1px;background:#5a6296;"></div>
<div class="a" style="left:4.75px;top:76.45px;width:10.5px;height:10.5px;background:#2b316f;border-radius:50%"></div>
<div class="t" style="left:5.00px;top:80.00px;width:10px;text-align:center;font-size:5.30px;font-weight:bold;color:#f4f5fb;transform:scaleX(0.87);transform-origin:50% 0;">1</div>
<div class="a" style="left:17.95px;top:76.45px;width:10.5px;height:10.5px;background:#394180;border-radius:50%"></div>
<div class="t" style="left:18.20px;top:80.00px;width:10px;text-align:center;font-size:5.30px;font-weight:bold;color:#f4f5fb;transform:scaleX(0.87);transform-origin:50% 0;">0</div>
<div class="a" style="left:31.15px;top:76.45px;width:10.5px;height:10.5px;background:#474f8b;border-radius:50%"></div>
<div class="t" style="left:31.40px;top:80.00px;width:10px;text-align:center;font-size:5.30px;font-weight:bold;color:#f4f5fb;transform:scaleX(0.87);transform-origin:50% 0;">0</div>
<div class="a" style="left:44.35px;top:76.45px;width:10.5px;height:10.5px;background:#535b94;border-radius:50%"></div>
<div class="t" style="left:44.60px;top:80.00px;width:10px;text-align:center;font-size:5.30px;font-weight:bold;color:#f4f5fb;transform:scaleX(0.87);transform-origin:50% 0;">0</div>
<div class="a" style="left:57.55px;top:76.45px;width:10.5px;height:10.5px;background:#5f679d;border-radius:50%"></div>
<div class="t" style="left:57.80px;top:80.00px;width:10px;text-align:center;font-size:5.30px;font-weight:bold;color:#f4f5fb;transform:scaleX(0.87);transform-origin:50% 0;">0</div>
<div class="a" style="left:70.75px;top:76.45px;width:10.5px;height:10.5px;background:#6a72a6;border-radius:50%"></div>
<div class="t" style="left:71.00px;top:80.00px;width:10px;text-align:center;font-size:5.30px;font-weight:bold;color:#f4f5fb;transform:scaleX(0.87);transform-origin:50% 0;">0</div>
<div class="a" style="left:83.95px;top:76.45px;width:10.5px;height:10.5px;background:#777eaf;border-radius:50%"></div>
<div class="t" style="left:84.20px;top:80.00px;width:10px;text-align:center;font-size:5.30px;font-weight:bold;color:#f4f5fb;transform:scaleX(0.87);transform-origin:50% 0;">0</div>
<div class="a" style="left:97.15px;top:76.45px;width:10.5px;height:10.5px;background:#858bb7;border-radius:50%"></div>
<div class="t" style="left:97.40px;top:80.00px;width:10px;text-align:center;font-size:5.30px;font-weight:bold;color:#f4f5fb;transform:scaleX(0.87);transform-origin:50% 0;">0</div>
<div class="a" style="left:110.35px;top:76.45px;width:10.5px;height:10.5px;background:#9095be;border-radius:50%"></div>
<div class="t" style="left:110.60px;top:80.00px;width:10px;text-align:center;font-size:5.30px;font-weight:bold;color:#f4f5fb;transform:scaleX(0.87);transform-origin:50% 0;">0</div>
<div class="a" style="left:123.55px;top:76.45px;width:10.5px;height:10.5px;background:#9ca0c6;border-radius:50%"></div>
<div class="t" style="left:123.80px;top:80.00px;width:10px;text-align:center;font-size:5.30px;font-weight:bold;color:#f4f5fb;transform:scaleX(0.87);transform-origin:50% 0;">0</div>
</div>
<div class="t" style="left:781.60px;top:232.8px;font-size:6.03px;color:#555;transform-origin:0 0;transform:rotate(45deg) scaleX(0.87)">Source</div>
<div class="t" style="left:794.80px;top:232.8px;font-size:6.03px;color:#555;transform-origin:0 0;transform:rotate(45deg) scaleX(0.87)">Shortlisted</div>
<div class="t" style="left:808.00px;top:232.8px;font-size:6.03px;color:#555;transform-origin:0 0;transform:rotate(45deg) scaleX(0.87)">L1 Cleared</div>
<div class="t" style="left:821.20px;top:232.8px;font-size:6.03px;color:#555;transform-origin:0 0;transform:rotate(45deg) scaleX(0.87)">L2 Cleared</div>
<div class="t" style="left:834.40px;top:232.8px;font-size:6.03px;color:#555;transform-origin:0 0;transform:rotate(45deg) scaleX(0.87)">L3 Cleared</div>
<div class="t" style="left:847.60px;top:232.8px;font-size:6.03px;color:#555;transform-origin:0 0;transform:rotate(45deg) scaleX(0.87)">HR Approved</div>
<div class="t" style="left:860.80px;top:232.8px;font-size:6.03px;color:#555;transform-origin:0 0;transform:rotate(45deg) scaleX(0.87)">Hiring Approved</div>
<div class="t" style="left:874.00px;top:232.8px;font-size:6.03px;color:#555;transform-origin:0 0;transform:rotate(45deg) scaleX(0.87)">Offer Approved</div>
<div class="t" style="left:887.20px;top:232.8px;font-size:6.03px;color:#555;transform-origin:0 0;transform:rotate(45deg) scaleX(0.87)">Offered</div>
<div class="t" style="left:900.40px;top:232.8px;font-size:6.03px;color:#555;transform-origin:0 0;transform:rotate(45deg) scaleX(0.87)">Onboarded</div>
<div class="t" style="left:142.00px;top:220.00px;font-size:6.60px;font-weight:bold;color:#2b2b2b;transform:scaleX(0.87);transform-origin:0 0;">JOB POSTING</div>
<div class="a" style="left:139px;top:234px;width:264px;height:179px;overflow:hidden">
<div class="a" style="left:3px;top:4.30px;width:258.2px;height:16.6px;background:#fff;border-left:2px solid #8b8ca6;box-shadow:0 0 0.8px 0.4px rgba(0,0,0,.08),0 0.8px 1.2px rgba(0,0,0,.1)">
<svg class="a" style="left:6.2px;top:5.8px" width="5.5" height="5.5" viewBox="0 0 10 10"><path d="M5 0.6 L6.3 3.6 L9.5 3.8 L7 5.9 L7.9 9.2 L5 7.4 L2.1 9.2 L3 5.9 L0.5 3.8 L3.7 3.6Z" fill="none" stroke="#d8d8d8" stroke-width="0.9"/></svg>
<span class="t" style="left:13.1px;top:4.91px;font-size:7.24px;color:#5548cf;-webkit-text-stroke:0.15px #5548cf;transform:scaleX(0.87);transform-origin:0 0">195 - NBA_test_Executive<svg style="margin-left:4px;vertical-align:0px" width="5.5" height="4" viewBox="0 0 5 4"><path d="M0.4 2.2 L1.8 3.4 L4.6 0.6" fill="none" stroke="#cfcfcf" stroke-width="0.8"/></svg></span>
</div>
<div class="a" style="left:3px;top:26.00px;width:258.2px;height:16.6px;background:#fff;border-left:2px solid #8b8ca6;box-shadow:0 0 0.8px 0.4px rgba(0,0,0,.08),0 0.8px 1.2px rgba(0,0,0,.1)">
<svg class="a" style="left:6.2px;top:5.8px" width="5.5" height="5.5" viewBox="0 0 10 10"><path d="M5 0.6 L6.3 3.6 L9.5 3.8 L7 5.9 L7.9 9.2 L5 7.4 L2.1 9.2 L3 5.9 L0.5 3.8 L3.7 3.6Z" fill="none" stroke="#d8d8d8" stroke-width="0.9"/></svg>
<span class="t" style="left:13.1px;top:4.91px;font-size:7.24px;color:#5548cf;-webkit-text-stroke:0.15px #5548cf;transform:scaleX(0.87);transform-origin:0 0">194 - HRMS_demo_Developer<svg style="margin-left:4px;vertical-align:0px" width="5.5" height="4" viewBox="0 0 5 4"><path d="M0.4 2.2 L1.8 3.4 L4.6 0.6" fill="none" stroke="#cfcfcf" stroke-width="0.8"/></svg></span>
</div>
<div class="a" style="left:3px;top:47.70px;width:258.2px;height:16.6px;background:#fff;border-left:2px solid #8b8ca6;box-shadow:0 0 0.8px 0.4px rgba(0,0,0,.08),0 0.8px 1.2px rgba(0,0,0,.1)">
<svg class="a" style="left:6.2px;top:5.8px" width="5.5" height="5.5" viewBox="0 0 10 10"><path d="M5 0.6 L6.3 3.6 L9.5 3.8 L7 5.9 L7.9 9.2 L5 7.4 L2.1 9.2 L3 5.9 L0.5 3.8 L3.7 3.6Z" fill="none" stroke="#d8d8d8" stroke-width="0.9"/></svg>
<span class="t" style="left:13.1px;top:4.91px;font-size:7.24px;color:#5548cf;-webkit-text-stroke:0.15px #5548cf;transform:scaleX(0.87);transform-origin:0 0">193 - NBA_test_Executive<svg style="margin-left:4px;vertical-align:0px" width="5.5" height="4" viewBox="0 0 5 4"><path d="M0.4 2.2 L1.8 3.4 L4.6 0.6" fill="none" stroke="#cfcfcf" stroke-width="0.8"/></svg></span>
</div>
<div class="a" style="left:3px;top:69.40px;width:258.2px;height:16.6px;background:#fff;border-left:2px solid #8b8ca6;box-shadow:0 0 0.8px 0.4px rgba(0,0,0,.08),0 0.8px 1.2px rgba(0,0,0,.1)">
<svg class="a" style="left:6.2px;top:5.8px" width="5.5" height="5.5" viewBox="0 0 10 10"><path d="M5 0.6 L6.3 3.6 L9.5 3.8 L7 5.9 L7.9 9.2 L5 7.4 L2.1 9.2 L3 5.9 L0.5 3.8 L3.7 3.6Z" fill="none" stroke="#d8d8d8" stroke-width="0.9"/></svg>
<span class="t" style="left:13.1px;top:4.91px;font-size:7.24px;color:#5548cf;-webkit-text-stroke:0.15px #5548cf;transform:scaleX(0.87);transform-origin:0 0">190 - NBA_Skillstackadded_HR<svg style="margin-left:4px;vertical-align:0px" width="5.5" height="4" viewBox="0 0 5 4"><path d="M0.4 2.2 L1.8 3.4 L4.6 0.6" fill="none" stroke="#cfcfcf" stroke-width="0.8"/></svg></span>
</div>
<div class="a" style="left:3px;top:91.10px;width:258.2px;height:16.6px;background:#fff;border-left:2px solid #8b8ca6;box-shadow:0 0 0.8px 0.4px rgba(0,0,0,.08),0 0.8px 1.2px rgba(0,0,0,.1)">
<svg class="a" style="left:6.2px;top:5.8px" width="5.5" height="5.5" viewBox="0 0 10 10"><path d="M5 0.6 L6.3 3.6 L9.5 3.8 L7 5.9 L7.9 9.2 L5 7.4 L2.1 9.2 L3 5.9 L0.5 3.8 L3.7 3.6Z" fill="none" stroke="#d8d8d8" stroke-width="0.9"/></svg>
<span class="t" style="left:13.1px;top:4.91px;font-size:7.24px;color:#5548cf;-webkit-text-stroke:0.15px #5548cf;transform:scaleX(0.87);transform-origin:0 0">187 - HRMS_NA_Developer<svg style="margin-left:4px;vertical-align:0px" width="5.5" height="4" viewBox="0 0 5 4"><path d="M0.4 2.2 L1.8 3.4 L4.6 0.6" fill="none" stroke="#cfcfcf" stroke-width="0.8"/></svg></span>
</div>
<div class="a" style="left:3px;top:112.80px;width:258.2px;height:16.6px;background:#fff;border-left:2px solid #8b8ca6;box-shadow:0 0 0.8px 0.4px rgba(0,0,0,.08),0 0.8px 1.2px rgba(0,0,0,.1)">
<svg class="a" style="left:6.2px;top:5.8px" width="5.5" height="5.5" viewBox="0 0 10 10"><path d="M5 0.6 L6.3 3.6 L9.5 3.8 L7 5.9 L7.9 9.2 L5 7.4 L2.1 9.2 L3 5.9 L0.5 3.8 L3.7 3.6Z" fill="none" stroke="#d8d8d8" stroke-width="0.9"/></svg>
<span class="t" style="left:13.1px;top:4.91px;font-size:7.24px;color:#5548cf;-webkit-text-stroke:0.15px #5548cf;transform:scaleX(0.87);transform-origin:0 0">186 - HRMS_Computer_AccountantLead<svg style="margin-left:4px;vertical-align:0px" width="5.5" height="4" viewBox="0 0 5 4"><path d="M0.4 2.2 L1.8 3.4 L4.6 0.6" fill="none" stroke="#cfcfcf" stroke-width="0.8"/></svg></span>
</div>
<div class="a" style="left:3px;top:134.50px;width:258.2px;height:16.6px;background:#fff;border-left:2px solid #8b8ca6;box-shadow:0 0 0.8px 0.4px rgba(0,0,0,.08),0 0.8px 1.2px rgba(0,0,0,.1)">
<svg class="a" style="left:6.2px;top:5.8px" width="5.5" height="5.5" viewBox="0 0 10 10"><path d="M5 0.6 L6.3 3.6 L9.5 3.8 L7 5.9 L7.9 9.2 L5 7.4 L2.1 9.2 L3 5.9 L0.5 3.8 L3.7 3.6Z" fill="none" stroke="#d8d8d8" stroke-width="0.9"/></svg>
<span class="t" style="left:13.1px;top:4.91px;font-size:7.24px;color:#5548cf;-webkit-text-stroke:0.15px #5548cf;transform:scaleX(0.87);transform-origin:0 0">185 - HRtrainee_eer_Jr.Engineer<svg style="margin-left:4px;vertical-align:0px" width="5.5" height="4" viewBox="0 0 5 4"><path d="M0.4 2.2 L1.8 3.4 L4.6 0.6" fill="none" stroke="#cfcfcf" stroke-width="0.8"/></svg></span>
</div>
<div class="a" style="left:3px;top:156.20px;width:258.2px;height:16.6px;background:#fff;border-left:2px solid #8b8ca6;box-shadow:0 0 0.8px 0.4px rgba(0,0,0,.08),0 0.8px 1.2px rgba(0,0,0,.1)">
<svg class="a" style="left:6.2px;top:5.8px" width="5.5" height="5.5" viewBox="0 0 10 10"><path d="M5 0.6 L6.3 3.6 L9.5 3.8 L7 5.9 L7.9 9.2 L5 7.4 L2.1 9.2 L3 5.9 L0.5 3.8 L3.7 3.6Z" fill="none" stroke="#d8d8d8" stroke-width="0.9"/></svg>
<span class="t" style="left:13.1px;top:4.91px;font-size:7.24px;color:#5548cf;-webkit-text-stroke:0.15px #5548cf;transform:scaleX(0.87);transform-origin:0 0">184 - HR_eer_Jr.Engineer<svg style="margin-left:4px;vertical-align:0px" width="5.5" height="4" viewBox="0 0 5 4"><path d="M0.4 2.2 L1.8 3.4 L4.6 0.6" fill="none" stroke="#cfcfcf" stroke-width="0.8"/></svg></span>
</div>
<div class="a" style="left:3px;top:177.90px;width:258.2px;height:16.6px;background:#fff;border-left:2px solid #8b8ca6;box-shadow:0 0 0.8px 0.4px rgba(0,0,0,.08),0 0.8px 1.2px rgba(0,0,0,.1)">
</div>
</div>
<div class="t" style="left:422.80px;top:220.00px;font-size:6.60px;font-weight:bold;color:#2b2b2b;transform:scaleX(0.87);transform-origin:0 0;">RECRUITING FUNNEL: TEST - CLOUD CUSTOMER</div>
<div class="a" style="left:687.6px;top:221.5px;width:2.2px;height:2.2px;background:#333;border-radius:50%"></div>
<div class="a" style="left:691.2px;top:221.5px;width:2.2px;height:2.2px;background:#333;border-radius:50%"></div>
<div class="a" style="left:694.8000000000001px;top:221.5px;width:2.2px;height:2.2px;background:#333;border-radius:50%"></div>
<div class="t" style="left:423.00px;top:232.00px;font-size:6.30px;font-weight:normal;color:#ababab;transform:scaleX(0.87);transform-origin:0 0;">From</div>
<div class="t" style="left:423.00px;top:243.00px;font-size:6.65px;font-weight:normal;color:#333;transform:scaleX(0.87);transform-origin:0 0;">05-Dec-2023</div>
<div class="a" style="left:423px;top:248.9px;width:129.5px;height:0.8px;background:#dcdcdc;"></div>
<svg class="a" style="left:547.5px;top:241.3px" width="6" height="6" viewBox="0 0 6 6"><rect x="0.5" y="0.8" width="5" height="4.8" fill="none" stroke="#dcdcdc" stroke-width="0.6"/><rect x="0.5" y="0.8" width="5" height="1.1" fill="#dcdcdc"/></svg>
<div class="t" style="left:560.00px;top:232.00px;font-size:6.30px;font-weight:normal;color:#ababab;transform:scaleX(0.87);transform-origin:0 0;">To</div>
<div class="t" style="left:560.00px;top:243.00px;font-size:6.65px;font-weight:normal;color:#333;transform:scaleX(0.87);transform-origin:0 0;">04-Jan-2024</div>
<div class="a" style="left:560px;top:248.9px;width:129.6px;height:0.8px;background:#dcdcdc;"></div>
<svg class="a" style="left:684px;top:241.3px" width="6" height="6" viewBox="0 0 6 6"><rect x="0.5" y="0.8" width="5" height="4.8" fill="none" stroke="#dcdcdc" stroke-width="0.6"/><rect x="0.5" y="0.8" width="5" height="1.1" fill="#dcdcdc"/></svg>
<svg class="a" style="left:460px;top:250px" width="200" height="170" viewBox="0 0 200 170"><defs><linearGradient id="tg" x1="0" y1="0" x2="1" y2="0"><stop offset="0" stop-color="#2a3067"/><stop offset="0.5" stop-color="#252b5f"/><stop offset="1" stop-color="#2d336b"/></linearGradient></defs><path d="M39.16 19.39 L37.55 20.45 L35.94 21.80 L34.45 23.33 L33.10 25.03 L31.85 26.88 L30.72 28.87 L29.69 30.99 L28.75 33.23 L27.90 35.58 L27.14 38.03 L26.46 40.56 L25.86 43.18 L25.33 45.87 L24.88 48.62 L24.51 51.42 L24.20 54.26 L23.96 57.12 L23.79 60.01 L23.68 62.91 L23.64 65.81 L23.66 68.69 L23.74 71.55 L23.88 74.38 L24.08 77.17 L24.33 79.90 L24.64 82.56 L25.00 85.15 L25.41 87.66 L25.88 90.06 L26.38 92.32 L26.94 95.11 L27.58 97.91 L28.27 100.68 L29.02 103.41 L29.83 106.11 L30.69 108.78 L31.60 111.40 L32.55 113.97 L33.55 116.50 L34.59 118.97 L35.67 121.39 L36.78 123.76 L37.93 126.06 L39.10 128.30 L40.30 130.47 L41.53 132.57 L42.77 134.59 L44.04 136.54 L45.31 138.41 L46.60 140.19 L47.90 141.89 L49.21 143.49 L50.52 145.01 L51.83 146.42 L53.15 147.74 L54.45 148.95 L55.75 150.05 L57.05 151.05 L58.33 151.93 L59.57 152.68 L60.43 151.32 L59.25 150.55 L58.08 149.68 L56.89 148.70 L55.69 147.60 L54.47 146.40 L53.25 145.10 L52.03 143.70 L50.80 142.20 L49.58 140.60 L48.36 138.92 L47.15 137.15 L45.95 135.30 L44.76 133.37 L43.60 131.36 L42.45 129.28 L41.32 127.13 L40.22 124.92 L39.15 122.64 L38.12 120.31 L37.11 117.92 L36.15 115.47 L35.22 112.98 L34.34 110.44 L33.50 107.86 L32.72 105.25 L31.98 102.60 L31.30 99.91 L30.68 97.20 L30.12 94.47 L29.62 91.68 L29.17 89.42 L28.78 87.09 L28.43 84.67 L28.14 82.15 L27.90 79.56 L27.71 76.91 L27.57 74.20 L27.49 71.45 L27.47 68.66 L27.51 65.86 L27.60 63.05 L27.76 60.24 L27.98 57.45 L28.27 54.69 L28.62 51.96 L29.04 49.28 L29.52 46.66 L30.07 44.12 L30.69 41.67 L31.38 39.31 L32.14 37.06 L32.97 34.93 L33.86 32.94 L34.82 31.10 L35.84 29.41 L36.91 27.90 L38.04 26.56 L39.22 25.41 L40.44 24.46 L41.84 23.61Z" fill="#c9ccd4"/><path d="M65 155 L55.5 156.2 L59.5 147Z" fill="#c9ccd4"/><path d="M38.95 12.80 L44.00 36.00 Q99.70 41.40 155.40 36.00 L160.45 12.80Z" fill="#4a4f88"/><ellipse cx="99.70" cy="12.80" rx="60.75" ry="3.6" fill="url(#tg)"/><path d="M46.50 44.80 L51.10 66.90 Q99.70 72.90 148.30 66.90 L152.90 44.80Z" fill="#7176ad"/><ellipse cx="99.70" cy="44.80" rx="53.2" ry="3.3" fill="url(#tg)"/><path d="M54.10 77.30 L58.30 98.60 Q99.70 106.20 141.10 98.60 L145.30 77.30Z" fill="#6b70a6"/><ellipse cx="99.70" cy="77.30" rx="45.6" ry="3.5" fill="url(#tg)"/><path d="M61.10 109.20 L65.20 130.10 Q99.70 136.50 134.20 130.10 L138.30 109.20Z" fill="#6d72a8"/><ellipse cx="99.70" cy="109.20" rx="38.6" ry="3.2" fill="url(#tg)"/><path d="M68.50 141.00 L72.50 160.60 Q99.70 169.00 126.90 160.60 L130.90 141.00Z" fill="#6268a0"/><ellipse cx="99.70" cy="141.00" rx="31.2" ry="3.5" fill="url(#tg)"/><path d="M157.5 30.5 C166.5 33.5, 168 47.5, 160 53.0" fill="none" stroke="#c5c9d0" stroke-width="1.2"/><path d="M157.8 55.3 L158.6 51.1 L162.2 53.9Z" fill="#c5c9d0"/><path d="M150.5 64.5 C159.5 67.5, 160.5 80.5, 152.5 86.0" fill="none" stroke="#c5c9d0" stroke-width="1.2"/><path d="M150.3 88.3 L151.1 84.1 L154.7 86.9Z" fill="#c5c9d0"/><path d="M144 96.5 C152 99.5, 151 111, 144 116.5" fill="none" stroke="#c5c9d0" stroke-width="1.2"/><path d="M141.8 118.8 L142.6 114.6 L146.2 117.4Z" fill="#c5c9d0"/><path d="M137.5 128.5 C145.5 131.5, 144 143, 137 148.5" fill="none" stroke="#c5c9d0" stroke-width="1.2"/><path d="M134.8 150.8 L135.6 146.6 L139.2 149.4Z" fill="#c5c9d0"/></svg>
<div class="t" style="left:544.70px;top:266.00px;width:30px;text-align:center;font-size:9.90px;font-weight:bold;color:#fff;transform:scaleX(0.87);transform-origin:50% 0;">7</div>
<div class="t" style="left:529.70px;top:278.00px;width:60px;text-align:center;font-size:6.30px;font-weight:bold;color:#f4f4fa;transform:scaleX(0.87);transform-origin:50% 0;">Sourced</div>
<div class="t" style="left:544.70px;top:299.00px;width:30px;text-align:center;font-size:9.90px;font-weight:bold;color:#fff;transform:scaleX(0.87);transform-origin:50% 0;">4</div>
<div class="t" style="left:529.70px;top:310.00px;width:60px;text-align:center;font-size:6.30px;font-weight:bold;color:#f4f4fa;transform:scaleX(0.87);transform-origin:50% 0;">Shortlisted</div>
<div class="t" style="left:544.70px;top:330.00px;width:30px;text-align:center;font-size:9.90px;font-weight:bold;color:#fff;transform:scaleX(0.87);transform-origin:50% 0;">0</div>
<div class="t" style="left:529.70px;top:342.00px;width:60px;text-align:center;font-size:6.30px;font-weight:bold;color:#f4f4fa;transform:scaleX(0.87);transform-origin:50% 0;">Cleared</div>
<div class="t" style="left:544.70px;top:363.00px;width:30px;text-align:center;font-size:9.90px;font-weight:bold;color:#fff;transform:scaleX(0.87);transform-origin:50% 0;">1</div>
<div class="t" style="left:529.70px;top:373.00px;width:60px;text-align:center;font-size:6.30px;font-weight:bold;color:#f4f4fa;transform:scaleX(0.87);transform-origin:50% 0;">Offered</div>
<div class="t" style="left:544.70px;top:394.00px;width:30px;text-align:center;font-size:9.90px;font-weight:bold;color:#fff;transform:scaleX(0.87);transform-origin:50% 0;">0</div>
<div class="t" style="left:529.70px;top:405.00px;width:60px;text-align:center;font-size:6.30px;font-weight:bold;color:#f4f4fa;transform:scaleX(0.87);transform-origin:50% 0;">Onboarded</div>
<div class="t" style="left:630.30px;top:290.00px;font-size:7.25px;font-weight:normal;color:#444;transform:scaleX(0.87);transform-origin:0 0;">57%</div>
<div class="t" style="left:624.80px;top:323.00px;font-size:7.25px;font-weight:normal;color:#444;transform:scaleX(0.87);transform-origin:0 0;">0%</div>
<div class="t" style="left:616.30px;top:354.00px;font-size:7.25px;font-weight:normal;color:#444;transform:scaleX(0.87);transform-origin:0 0;">0%</div>
<div class="t" style="left:607.80px;top:386.00px;font-size:7.25px;font-weight:normal;color:#444;transform:scaleX(0.87);transform-origin:0 0;">0%</div>
<div class="t" style="left:492.30px;top:338.00px;font-size:7.25px;font-weight:normal;color:#444;transform:scaleX(0.87);transform-origin:0 0;">0%</div>
<div class="t" style="left:718.00px;top:282.00px;font-size:6.60px;font-weight:bold;color:#2b2b2b;transform:scaleX(0.87);transform-origin:0 0;">NEW JOINEE(S)</div>
<div class="t" style="left:935.00px;top:281.00px;font-size:7.60px;font-weight:normal;color:#444;transform:scaleX(0.87);transform-origin:0 0;">2024</div>
<div class="a" style="left:953.4px;top:279.4px;width:24px;height:10.8px;background:#0d47a8;border-radius:1.5px"></div>
<div class="t" style="left:953.40px;top:281.00px;width:24px;text-align:center;font-size:6.00px;font-weight:bold;color:#fff;transform:scaleX(0.87);transform-origin:50% 0;">0 Joined</div>
<div class="a" style="left:965.6px;top:297px;width:12px;height:12px;background:#e3e3e3;border-radius:50%"></div>
<svg class="a" style="left:969px;top:299.8px" width="5" height="6.5" viewBox="0 0 5 6.5"><path d="M3.8 0.6 L1.2 3.25 L3.8 5.9" fill="none" stroke="#333" stroke-width="0.9"/></svg>
<div class="t" style="left:718.00px;top:302.00px;font-size:7.00px;font-weight:normal;color:#444;transform:scaleX(0.87);transform-origin:0 0;">January&nbsp;&nbsp;2024</div>
<div class="a" style="left:759.5px;top:299.8px;width:10.5px;height:10.5px;background:#1e5bbf;border-radius:1.5px"></div>
<div class="t" style="left:759.75px;top:302.00px;width:10px;text-align:center;font-size:6.00px;font-weight:bold;color:#fff;transform:scaleX(0.87);transform-origin:50% 0;">0</div>
<div class="a" style="left:718px;top:315px;width:259px;height:0.8px;background:#e4e4e4;"></div>
</body></html>
